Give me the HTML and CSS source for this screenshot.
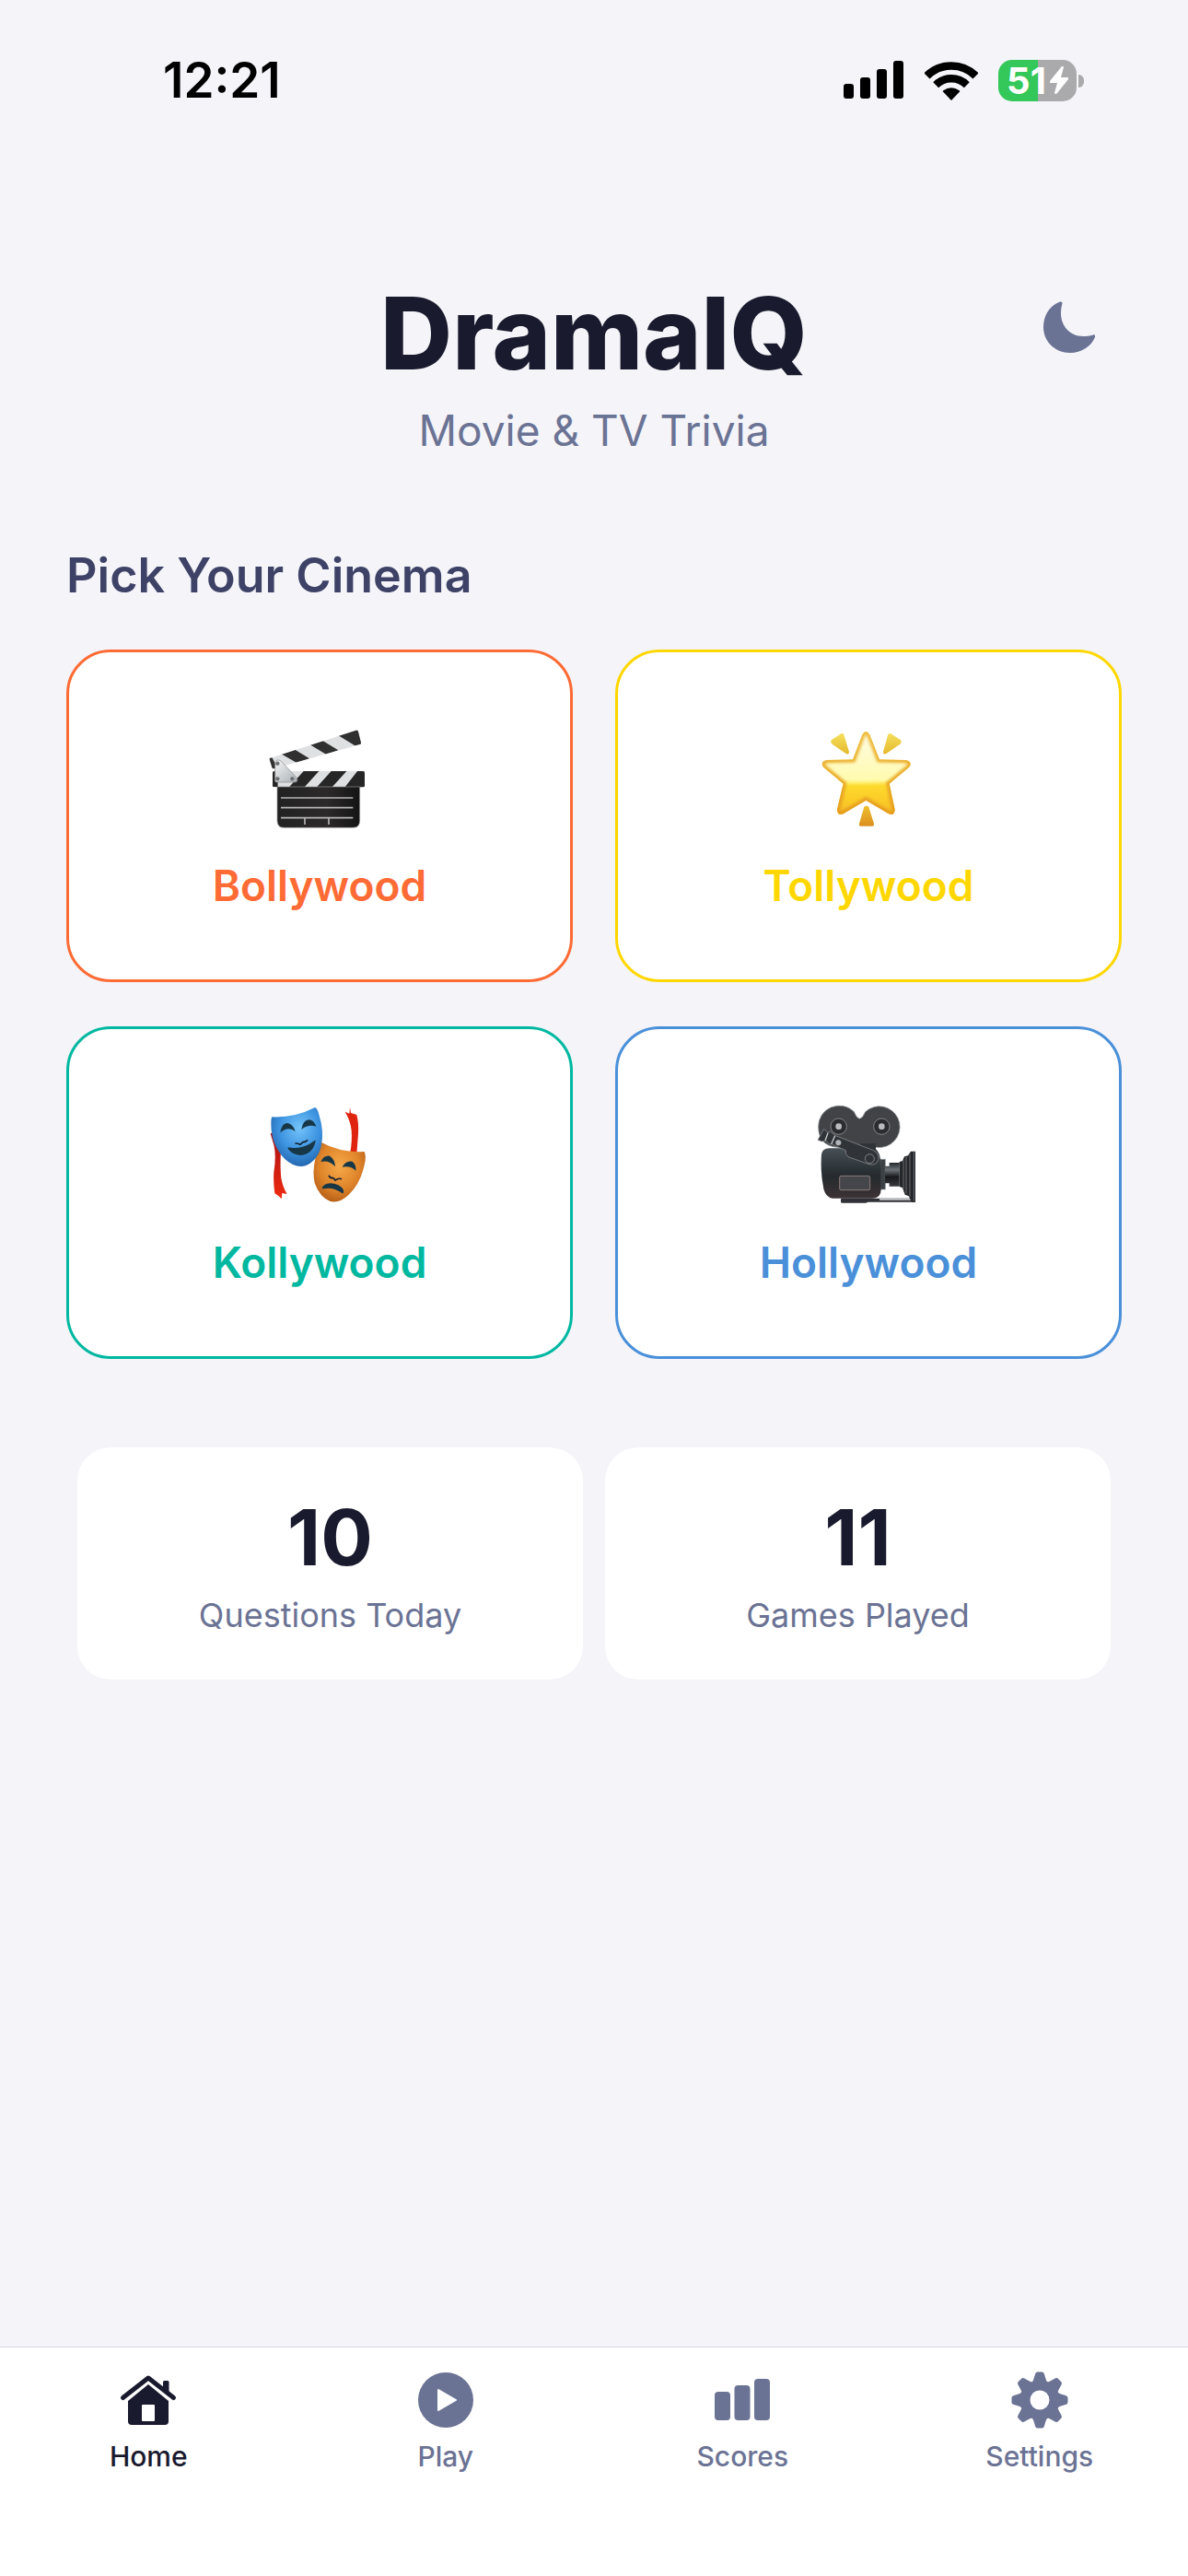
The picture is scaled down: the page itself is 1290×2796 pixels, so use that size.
FILE: index.html
```html
<!DOCTYPE html>
<html lang="en">
<head>
    <meta charset="UTF-8">
    <meta name="viewport" content="width=device-width, initial-scale=1.0">
    <title>DramaIQ - Home</title>
    <link rel="stylesheet" href="styles.css">
</head>
<body>
    <div class="status-bar">
        <span class="time">12:21</span>
        <div class="indicators">
            <svg class="signal" viewBox="0 0 66 42">
                <rect x="0" y="25" width="11" height="16" rx="3"/>
                <rect x="18" y="18" width="11" height="23" rx="3"/>
                <rect x="36" y="9" width="11" height="32" rx="3"/>
                <rect x="54" y="0" width="11" height="41" rx="3"/>
            </svg>
            <svg class="wifi" viewBox="312 44 172 128">
                <path d="M319 93A112 112 0 0 1 477 93" fill="none" stroke="#000" stroke-width="26"/>
                <path d="M348 122A71 71 0 0 1 448 122" fill="none" stroke="#000" stroke-width="25"/>
                <path d="M398 172L371 144Q369 142 372 140Q398 122 424 140Q427 142 425 144Z"/>
            </svg>
            <div class="battery">
                <span>51</span>
                <svg viewBox="0 0 20 30"><path d="M13 0L0 16Q-1 18 1 18H8L5 29Q6 31 8 29L20 14Q21 12 19 12H12L15 1Q14-1 13 0Z" fill="#fff"/></svg>
            </div>
        </div>
    </div>

    <main>
        <header>
            <div class="brand">
                <h1>DramaIQ</h1>
                <p>Movie &amp; TV Trivia</p>
            </div>
            <button class="theme-toggle" aria-label="Dark mode">
                <svg viewBox="0 0 60 60"><path d="M20 2.5C8 7 2 18 2 30C2 46 15 58 31 58C43 58 54 51 58 41C58.6 39 57.5 38 56 38.5C52 40 49 40 45 40C31 40 21 29 21 15C21 11 21.5 8 22.5 4.5Q23 2 20 2.5Z" fill="currentColor"/></svg>
            </button>
        </header>

        <h2>Pick Your Cinema</h2>
        <div class="cinemas">
            <button class="cinema bollywood">
                <svg viewBox="6 0 390 390">
                    <defs>
                        <linearGradient id="board" x1="0" x2="1"><stop offset="0" stop-color="#222"/><stop offset=".6" stop-color="#2c292a"/><stop offset="1" stop-color="#141414"/></linearGradient>
                        <linearGradient id="steel" x1="0" x2="1" y2="1"><stop offset="0" stop-color="#f4f5f6"/><stop offset="1" stop-color="#a9aeb3"/></linearGradient>
                        <clipPath id="armClip"><path d="M37 130L320 38Q325 37 327 42L336 78Q337 82 333 84L52 163Q48 164 46 159Z"/></clipPath>
                        <clipPath id="barClip"><rect x="48" y="171" width="300" height="52" rx="5"/></clipPath>
                    </defs>
                    <g clip-path="url(#armClip)">
                        <path d="M30 25H345V170H30Z" fill="#dfe0e2"/>
                        <path d="M28 120L46 126L66 165L40 175ZM76 115L116 98L168 130L128 145ZM170 85L210 71L262 103L222 116ZM262 55L325 32L345 82L316 88Z" fill="#303031"/>
                    </g>
                    <g clip-path="url(#barClip)">
                        <path d="M45 170H350V225H45Z" fill="#dfe0e2"/>
                        <path d="M48 171H65V223H48ZM150 170H200L150 225H100ZM240 170H290L240 225H190ZM325 170H360V225H282Z" fill="#262627"/>
                    </g>
                    <path d="M63 222H332V332Q332 355 309 355H86Q63 355 63 332Z" fill="url(#board)" stroke="#999" stroke-width="2"/>
                    <path d="M75 258H310M75 290H310M75 323H310M153 323V345M231 323V345" stroke="#b5b5b5" stroke-width="5"/>
                    <path d="M56 145Q56 134 68 135Q74 136 79 142L126 192Q134 207 118 207H61Q56 207 56 202Z" fill="url(#steel)" stroke="#888" stroke-width="2"/>
                    <g fill="#66696c" stroke="#8e9194" stroke-width="2"><circle cx="64" cy="146" r="6"/><circle cx="64" cy="196" r="6"/><circle cx="112" cy="196" r="6"/></g>
                </svg>
                <span>Bollywood</span>
            </button>
            <button class="cinema tollywood">
                <svg viewBox="-6 0 390 390">
                    <defs>
                        <linearGradient id="starFill" x1="0" x2="0" y2="1"><stop offset="0" stop-color="#fffbe8"/><stop offset=".58" stop-color="#fffbb0"/><stop offset=".65" stop-color="#ffe93f"/><stop offset="1" stop-color="#f5b021"/></linearGradient>
                        <linearGradient id="starEdge" x1="0" x2="0" y2="1"><stop offset="0" stop-color="#efbd3c"/><stop offset="1" stop-color="#e59c1c"/></linearGradient>
                        <linearGradient id="ray" x1="0" x2="0" y2="1"><stop offset="0" stop-color="#f5df5d"/><stop offset="1" stop-color="#e5b92c"/></linearGradient>
                        <linearGradient id="rayLow" x1="0" x2="0" y2="1"><stop offset="0" stop-color="#eec02e"/><stop offset="1" stop-color="#dc9020"/></linearGradient>
                        <filter id="soft"><feGaussianBlur stdDeviation="5"/></filter>
                        <clipPath id="starClip"><path d="M169 52Q181 32 193 52L225 133L312 135Q335 142 321 159L257 212L275 296Q274 317 255 310L181 266L107 310Q88 317 87 296L107 212L43 159Q29 142 52 135L138 133Z"/></clipPath>
                    </defs>
                    <g clip-path="url(#starClip)">
                        <path d="M30 30H340V320H30Z" fill="url(#starFill)"/>
                        <path d="M70 215Q181 218 295 205L275 280H90Z" fill="#fbc81d" opacity=".45" filter="url(#soft)"/>
                        <path d="M169 52Q181 32 193 52L225 133L312 135Q335 142 321 159L257 212L275 296Q274 317 255 310L181 266L107 310Q88 317 87 296L107 212L43 159Q29 142 52 135L138 133Z" fill="none" stroke="url(#starEdge)" stroke-width="20" filter="url(#soft)"/>
                    </g>
                    <path d="M68 70L100 49Q106 46 109 52L126 108Q127 118 117 115L69 82Q64 76 68 70ZM294 70L262 49Q256 46 253 52L237 108Q236 118 246 115L294 82Q299 76 294 70Z" fill="url(#ray)"/>
                    <path d="M175 287Q182 281 190 287L207 342Q208 350 201 350H164Q157 350 159 342Z" fill="url(#rayLow)"/>
                </svg>
                <span>Tollywood</span>
            </button>
            <button class="cinema kollywood">
                <svg viewBox="6 0 390 390">
                    <defs>
                        <radialGradient id="blueMask" cx=".55" cy=".35" r=".7"><stop offset="0" stop-color="#74c3fa"/><stop offset=".55" stop-color="#3d94e0"/><stop offset="1" stop-color="#1f5fa8"/></radialGradient>
                        <radialGradient id="goldMask" cx=".5" cy=".4" r=".7"><stop offset="0" stop-color="#f6a94a"/><stop offset=".55" stop-color="#df8429"/><stop offset="1" stop-color="#a85312"/></radialGradient>
                        <linearGradient id="ribbon" x1="0" x2="0" y2="1"><stop offset="0" stop-color="#a80f12"/><stop offset="1" stop-color="#ef2b10"/></linearGradient>
                    </defs>
                    <path d="M41 124Q47 119 56 132L75 180Q72 230 76 270Q82 300 95 321L79 318L77 337Q65 324 55 319Q50 285 52 250Q60 200 53 165Z" fill="url(#ribbon)"/>
                    <path d="M300 39L303 57L322 63Q329 90 327 125L322 190H300Q308 150 305 115Q303 85 284 53L298 59Z" fill="#df2410"/>
                    <path d="M207 153Q270 187 347 183Q354 200 347 226Q333 290 296 323Q266 352 236 345Q201 331 185 285Q172 225 207 153Z" fill="url(#goldMask)"/>
                    <path d="M46 70Q120 73 186 39Q194 40 200 66Q216 115 207 162Q197 211 155 229Q120 237 88 207Q42 161 43 90Q43 75 46 70Z" fill="url(#blueMask)"/>
                    <g fill="#173747">
                        <path d="M73 121Q80 81 105 93Q117 101 122 117Q99 99 73 121Z"/>
                        <path d="M142 111Q146 80 168 79Q183 82 190 101Q164 93 142 111Z"/>
                        <path d="M98 169Q145 178 185 147Q190 144 187 153Q177 192 139 195Q112 193 98 174Z"/>
                        <path d="M205 216Q215 194 234 197Q251 208 252 232Q233 210 205 216Z"/>
                        <path d="M275 233Q287 211 308 215Q321 225 319 245Q302 228 275 233Z"/>
                        <path d="M209 304Q211 287 237 286Q269 289 279 308Q281 319 275 319Q248 297 212 304Z"/>
                    </g>
                    <path d="M121 156Q131 156 138 160L147 152Q156 153 162 145M231 260Q234 270 246 269L252 276Q263 268 273 272" fill="none" stroke="#13202f" stroke-width="5"/>
                </svg>
                <span>Kollywood</span>
            </button>
            <button class="cinema hollywood">
                <svg viewBox="24 0 390 390">
                    <defs>
                        <linearGradient id="body" x1="0" x2="0" y2="1"><stop offset="0" stop-color="#475056"/><stop offset=".55" stop-color="#242a2e"/><stop offset="1" stop-color="#3c3234"/></linearGradient>
                        <linearGradient id="tube" x1="0" x2="0" y2="1"><stop offset="0" stop-color="#24272a"/><stop offset=".3" stop-color="#6d7378"/><stop offset=".6" stop-color="#17191c"/><stop offset="1" stop-color="#393a3d"/></linearGradient>
                    </defs>
                    <path d="M130 335H372V347H218L210 350H132Q127 349 130 335Z" fill="#303136"/>
                    <path d="M255 337H360" stroke="#c4c5c9" stroke-width="8"/>
                    <path d="M56 102A68 67 0 0 1 172 53Q190 98 209 53A67 67 0 1 1 262 169H118Q56 163 56 102Z" fill="#414347" stroke="#85888c" stroke-width="2"/>
                    <g stroke="#aaa" stroke-width="2" fill="#2b2c30">
                        <circle cx="122" cy="101" r="26"/><circle cx="262" cy="101" r="26"/>
                    </g>
                    <circle cx="122" cy="101" r="10" fill="#b9bbbe"/>
                    <circle cx="262" cy="101" r="10" fill="#b9bbbe"/>
                    <path d="M258 208H274V306H258Z" fill="#3c4146" stroke="#8b8e93" stroke-width="2"/>
                    <path d="M273 230H287V219H320V296H287V286H273Z" fill="url(#tube)"/>
                    <path d="M320 216L330 213L336 199L348 196L357 182H372V347H360L350 328L338 323L330 301L320 297Z" fill="#242629"/>
                    <path d="M333 208V306M342 199V319M354 190V330M367 183V344" stroke="#6b6c70" stroke-width="3"/>
                    <path d="M91 172H240Q260 185 260 230V306Q260 335 232 335H102Q79 332 73 304Q62 250 66 192Q69 172 91 172Z" fill="url(#body)"/>
                    <path d="M193 156H243V182H193Z" fill="#303337"/>
                    <path d="M74 109L87 122L94 117L112 131L235 179Q254 188 252 208Q243 232 218 223L153 200Q142 190 145 179L111 164L101 158L93 159L80 147L67 150L54 145Z" fill="#303439" stroke="#97999d" stroke-width="2"/>
                    <path d="M87 122L78 147M110 131L98 158" stroke="#ccc" stroke-width="4"/>
                    <circle cx="121" cy="154" r="9" fill="#b3b5b8"/>
                    <circle cx="223" cy="206" r="15" fill="#303338" stroke="#a7a9ad" stroke-width="2"/>
                    <rect x="125" y="262" width="99" height="46" rx="5" fill="#454649" stroke="#b39c98" stroke-width="2"/>
                </svg>
                <span>Hollywood</span>
            </button>
        </div>

        <div class="stats">
            <div class="stat">
                <strong>10</strong>
                <span>Questions Today</span>
            </div>
            <div class="stat">
                <strong>11</strong>
                <span>Games Played</span>
            </div>
        </div>
    </main>

    <nav>
        <a href="#" class="active">
            <svg viewBox="0 0 66 66">
                <path d="M5.5 30.5L33 9L60.5 30.5" fill="none" stroke="currentColor" stroke-width="5" stroke-linecap="round" stroke-linejoin="round"/>
                <path d="M49 20V13.5Q49 12 50.5 12H54Q55.5 12 55.5 13.5V28Z" fill="currentColor"/>
                <path d="M33 16L55 34V56Q55 60 51 60H15Q11 60 11 56V34Z" fill="currentColor"/>
                <rect x="26" y="38" width="14" height="18" rx="1" fill="#fff"/>
            </svg>
            <span>Home</span>
        </a>
        <a href="#">
            <svg viewBox="0 0 66 66">
                <circle cx="33" cy="33" r="30" fill="currentColor"/>
                <path d="M25 22L44 33L25 44Z" fill="#fff" stroke="#fff" stroke-width="2" stroke-linejoin="round"/>
            </svg>
            <span>Play</span>
        </a>
        <a href="#">
            <svg viewBox="0 0 66 66" fill="currentColor">
                <rect x="3" y="24" width="17" height="31" rx="4"/>
                <rect x="24.5" y="17" width="17" height="38" rx="4"/>
                <rect x="46" y="10" width="17" height="45" rx="4"/>
            </svg>
            <span>Scores</span>
        </a>
        <a href="#">
            <svg viewBox="-33 -33 66 66" fill="currentColor">
                <defs><path id="tooth" d="M-10-18Q-7-20-6.5-23L-5-28Q-4.5-30.5-2.5-30.5H2.5Q4.5-30.5 5-28L6.5-23Q7-20 10-18Z"/></defs>
                <circle r="21.5"/>
                <use href="#tooth"/>
                <use href="#tooth" transform="rotate(45)"/>
                <use href="#tooth" transform="rotate(90)"/>
                <use href="#tooth" transform="rotate(135)"/>
                <use href="#tooth" transform="rotate(180)"/>
                <use href="#tooth" transform="rotate(225)"/>
                <use href="#tooth" transform="rotate(270)"/>
                <use href="#tooth" transform="rotate(315)"/>
                <circle r="10.5" fill="#fff"/>
            </svg>
            <span>Settings</span>
        </a>
    </nav>
</body>
</html>
```
FILE: styles.css
```css
* {
    box-sizing: border-box;
}

body {
    font-family: Inter, 'Liberation Sans', sans-serif;
    margin: 0;
    background-color: #f4f4f9;
    color: #1a1a2e;
    display: flex;
    flex-direction: column;
    min-height: 100vh;
}

h1, h2, p {
    margin: 0;
}

svg {
    display: block;
}

button {
    font-family: inherit;
    border: none;
    background: none;
    padding: 0;
    cursor: pointer;
}

/* Status bar */
.status-bar {
    display: flex;
    justify-content: space-between;
    align-items: center;
    padding: 56px 113px 0 177px;
    color: #000;
}

.time {
    font-size: 53px;
    line-height: 62px;
    font-weight: 600;
}

.indicators {
    display: flex;
    align-items: center;
    gap: 22px;
}

.signal {
    width: 66px;
    height: 42px;
}

.wifi {
    width: 58px;
    height: 43px;
}

.battery {
    position: relative;
    display: flex;
    align-items: center;
    justify-content: center;
    gap: 4px;
    width: 85px;
    height: 45px;
    margin-right: 8px;
    border-radius: 15px;
    background: linear-gradient(90deg, #34c759 51%, #aaaaac 51%);
    color: #fff;
    font-size: 40px;
    line-height: 45px;
    font-weight: 700;
}

.battery svg {
    width: 20px;
    height: 30px;
}

.battery::after {
    content: "";
    position: absolute;
    right: -8px;
    top: 16px;
    width: 6px;
    height: 14px;
    border-radius: 0 6px 6px 0;
    background: #aaaaac;
}

/* Content */
main {
    flex: 1;
    padding: 181px 72px 48px;
}

header {
    display: grid;
    grid-template-columns: 1fr auto 1fr;
}

.brand {
    grid-column: 2;
    text-align: center;
}

h1 {
    font-size: 108px;
    line-height: 126px;
    font-weight: 800;
}

.brand p {
    margin-top: 14px;
    font-size: 46px;
    line-height: 56px;
    color: #6b7394;
}

.theme-toggle {
    justify-self: end;
    align-self: start;
    padding: 26px 27px;
    color: #6b7394;
}

.theme-toggle svg {
    width: 60px;
    height: 60px;
}

h2 {
    margin: 98px 0 48px;
    font-size: 52px;
    line-height: 64px;
    font-weight: 600;
    color: #3d4266;
}

.cinemas {
    display: grid;
    grid-template-columns: 1fr 1fr;
    gap: 48px 46px;
}

.cinema {
    display: flex;
    flex-direction: column;
    align-items: center;
    gap: 23px;
    padding: 72px 24px 74px;
    border: 3px solid;
    border-radius: 48px;
    background: #fff;
    font-size: 46px;
    line-height: 56px;
    font-weight: 600;
}

.cinema svg {
    width: 130px;
    height: 130px;
}

.bollywood {
    color: #ff6b35;
}

.tollywood {
    color: #ffd700;
}

.kollywood {
    color: #00b8a0;
}

.hollywood {
    color: #4a90d9;
}

.stats {
    display: flex;
    gap: 24px;
    margin: 96px 12px 0;
}

.stat {
    flex: 1;
    display: flex;
    flex-direction: column;
    align-items: center;
    gap: 12px;
    padding: 48px 24px;
    border-radius: 36px;
    background: #fff;
}

.stat strong {
    font-size: 84px;
    line-height: 100px;
    font-weight: 700;
}

.stat span {
    font-size: 36px;
    line-height: 44px;
    color: #6b7394;
}

/* Tab bar */
nav {
    display: flex;
    padding: 24px 0 112px;
    border-top: 1px solid #d8d8e2;
    background: #fff;
}

nav a {
    flex: 1;
    display: flex;
    flex-direction: column;
    align-items: center;
    gap: 10px;
    font-size: 30px;
    line-height: 36px;
    font-weight: 500;
    color: #6b7394;
    text-decoration: none;
}

nav a.active {
    color: #1a1a2e;
}

nav svg {
    width: 66px;
    height: 66px;
}
```
